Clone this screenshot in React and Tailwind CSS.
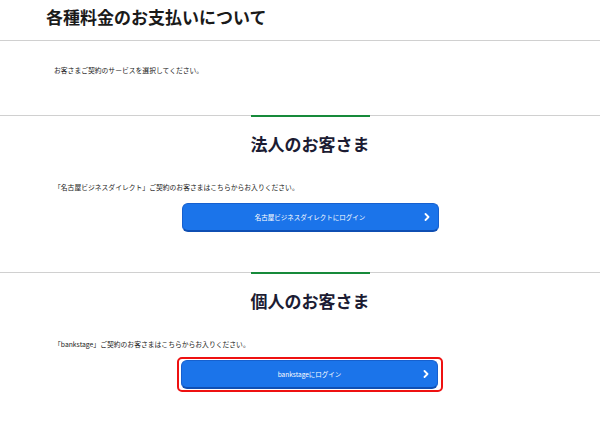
import React from 'react';

function Chevron() {
    return (
        <svg width="6" height="8" viewBox="0 0 6 8" className="justify-self-end mr-[8px]">
            <polyline points="1.5,1 4.5,4 1.5,7" fill="none" stroke="#fff" strokeWidth="1.8" strokeLinecap="round" strokeLinejoin="round" />
        </svg>
    );
}

function LoginButton({ label }) {
    return (
        <button className="grid grid-cols-[1fr_auto_1fr] items-center w-[257px] h-[29px] rounded-[6px] bg-[#1b74ea] border border-[#1660cf] border-b-2 border-b-[#0f4fb3] text-white text-[6.5px] leading-none">
            <span />
            <span>{label}</span>
            <Chevron />
        </button>
    );
}

function Section({ title, lead, label, highlight }) {
    return (
        <section className="border-t border-[#d0d0d0] pb-[40px]">
            <div className="ml-[54px] w-[512px]">
                <div className="mx-auto -mt-px h-[2px] w-[119px] bg-[#168a3a]" />
                <h2 className="mt-[15px] text-center text-[17px] font-bold leading-[24px] text-[#1c1c33]">{title}</h2>
                <p className="mt-[26px] text-[6.8px] leading-[10px] text-[#222]">{lead}</p>
                {highlight ? (
                    <div className="mt-[8px] mx-auto w-[266px] rounded-[5px] border-2 border-[#ee1111] p-[1px] pl-[2px] flex">
                        <LoginButton label={label} />
                    </div>
                ) : (
                    <div className="mt-[11px] flex justify-center">
                        <LoginButton label={label} />
                    </div>
                )}
            </div>
        </section>
    );
}

export default function App() {
    return (
        <div className="w-[600px] h-[424px] overflow-hidden bg-white text-[#222]" style={{ fontFamily: '"Noto Sans CJK JP", "Noto Sans", sans-serif' }}>
            <div className="h-[41px] border-b border-[#d0d0d0] pl-[46px] pt-[5px]">
                <h1 className="text-[17px] font-bold leading-[24px] text-[#1a1a1a]">各種料金のお支払いについて</h1>
            </div>
            <div className="h-[74px] pl-[54px] pt-[24px]">
                <p className="text-[6.8px] leading-[10px]">お客さまご契約のサービスを選択してください。</p>
            </div>
            <Section
                title="法人のお客さま"
                lead="「名古屋ビジネスダイレクト」ご契約のお客さまはこちらからお入りください。"
                label="名古屋ビジネスダイレクトにログイン"
            />
            <Section
                title="個人のお客さま"
                lead="「bankstage」ご契約のお客さまはこちらからお入りください。"
                label="bankstageにログイン"
                highlight
            />
        </div>
    );
}
